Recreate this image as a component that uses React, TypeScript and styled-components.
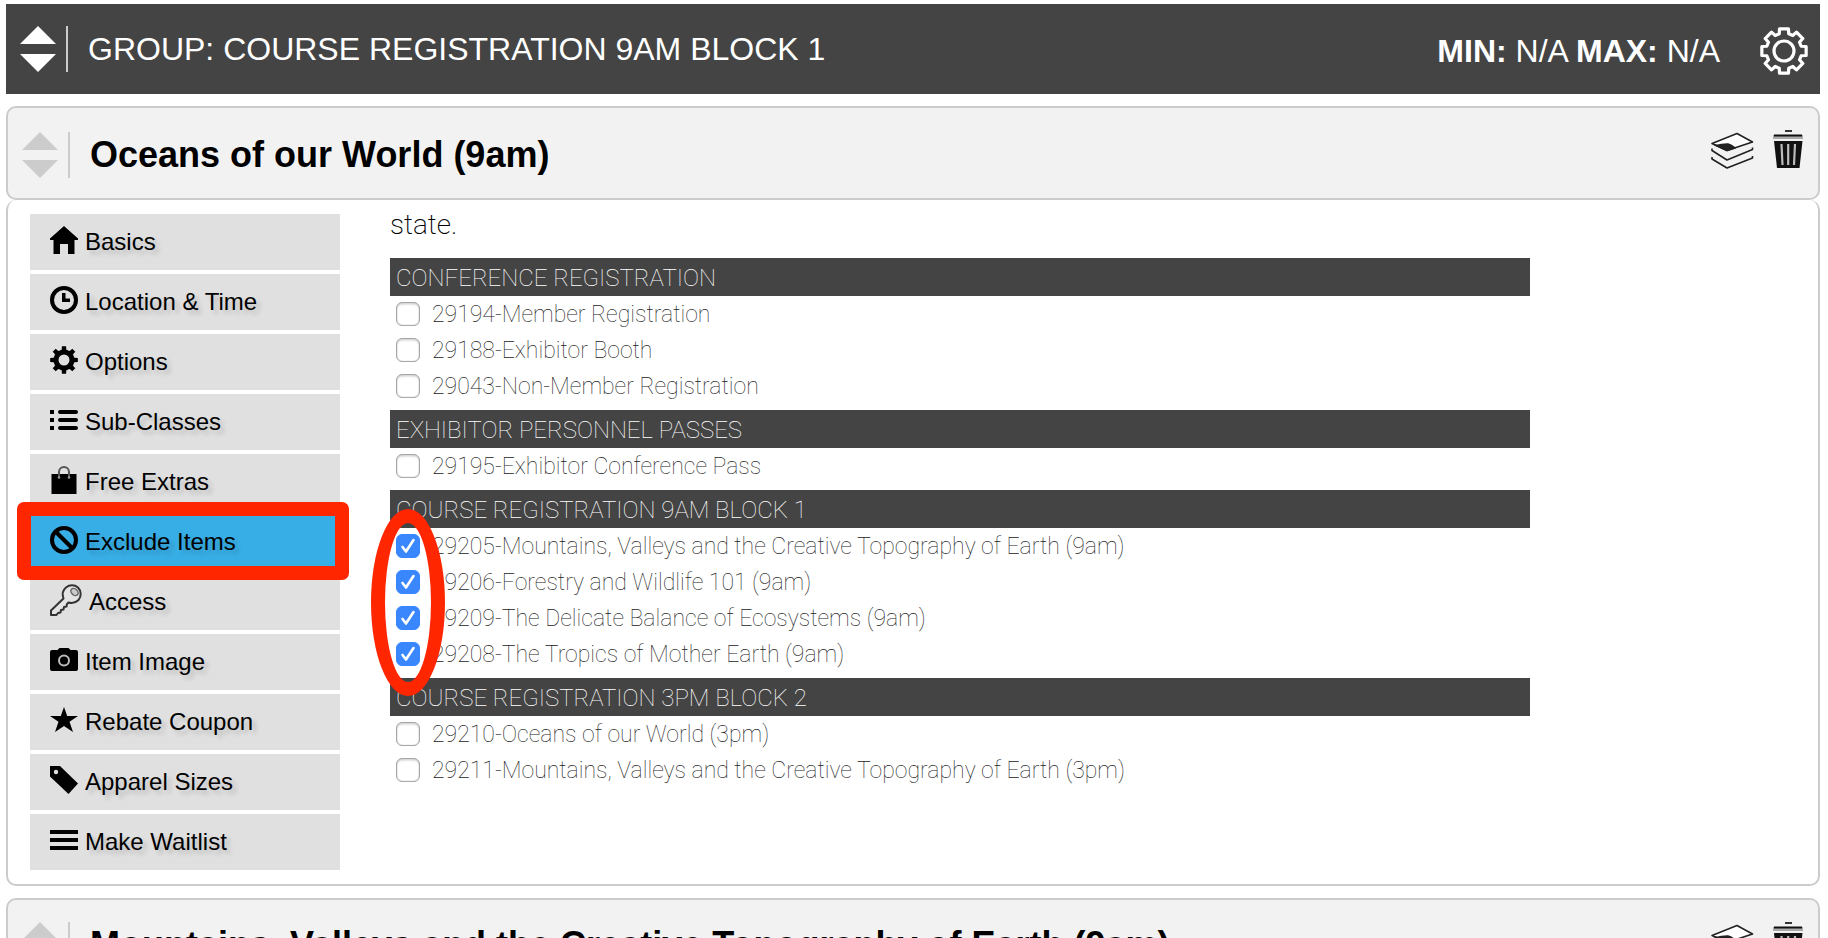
import React, { ReactNode, useState } from 'react';
import styled, { createGlobalStyle } from 'styled-components';

const GlobalStyle = createGlobalStyle`
  * { box-sizing: border-box; }
  body {
    margin: 0;
    background: #fff;
    color: #000;
    font-family: "Liberation Sans", Arial, sans-serif;
  }
  h1, h2, h3, p, ul { margin: 0; padding: 0; font-size: inherit; font-weight: inherit; }
  ul { list-style: none; }
`;

const Page = styled.main`
  height: 100vh;
  overflow: hidden;
  padding: 4px 8px 0 6px;
`;

/* ---------- Group bar ---------- */

const GroupBar = styled.header`
  display: flex;
  align-items: center;
  justify-content: space-between;
  min-height: 90px;
  padding: 0 12px 0 14px;
  margin-bottom: 12px;
  background: #444;
  color: #fff;
  font-size: 32px;
  line-height: 36px;
`;

const GroupTitle = styled.div`
  display: flex;
  align-items: center;
  gap: 20px;
`;

const GroupTools = styled.div`
  display: flex;
  align-items: center;
  gap: 40px;
  padding-top: 4px;
`;

const IconButton = styled.button`
  display: block;
  padding: 0;
  border: 0;
  background: none;
  color: inherit;
  cursor: pointer;

  svg { display: block; }
`;

const Grip = styled.button<{ $tone: string }>`
  flex: none;
  display: block;
  padding: 0 10px 0 0;
  border: 0;
  border-right: 2px solid #ccc;
  background: none;
  color: ${(p) => p.$tone};
  cursor: move;

  svg { display: block; }
`;

/* ---------- Item card ---------- */

const Card = styled.article`
  margin-bottom: 12px;
`;

const CardHeader = styled.div`
  display: flex;
  align-items: flex-start;
  justify-content: space-between;
  padding: 0 14px;
  border: 2px solid #ccc;
  border-radius: 10px;
  background: #f2f2f2;
`;

const CardTitle = styled.div<{ $open: boolean }>`
  display: flex;
  align-items: center;
  gap: 20px;
  padding: ${(p) => (p.$open ? '24px 0 20px' : '22px 0')};
  font-size: 36px;
  font-weight: 700;
  line-height: 40px;
`;

const CardActions = styled.div`
  display: flex;
  gap: 18px;
  padding-top: 21px;
`;

const CardBody = styled.div`
  display: flex;
  align-items: flex-start;
  gap: 50px;
  padding: 0 3px 14px 22px;
  border: 2px solid #ccc;
  border-top: 0;
  border-radius: 10px;
`;

/* ---------- Side navigation ---------- */

const SideNav = styled.nav`
  flex: none;
  display: flex;
  flex-direction: column;
  gap: 4px;
  width: 310px;
  padding-top: 14px;
`;

const NavButton = styled.button<{ $active: boolean }>`
  position: relative;
  display: flex;
  align-items: center;
  gap: 7px;
  height: 56px;
  padding: 0 20px;
  border: 0;
  background: ${(p) => (p.$active ? '#38aee6' : '#e0e0e0')};
  color: #000;
  font: 24px/28px "Liberation Sans", Arial, sans-serif;
  text-shadow: 4px 4px 4px rgba(0, 0, 0, 0.16);
  cursor: pointer;

  svg {
    flex: none;
    margin-bottom: 4px;
  }
`;

const BoxMark = styled.span`
  position: absolute;
  inset: -12px -9px -10px -13px;
  z-index: 1;
  border: 14px solid #ff2600;
  border-radius: 7px;
  pointer-events: none;
`;

/* ---------- Exclusion list ---------- */

const Exclusions = styled.div`
  flex: 1;
  min-width: 0;
  padding-top: 9px;
  font-family: Roboto, "Helvetica Neue", sans-serif;
  font-weight: 100;
`;

const Intro = styled.p`
  margin-bottom: 17px;
  font-size: 28px;
  font-weight: 200;
  line-height: 32px;
`;

const Section = styled.section`
  position: relative;
  width: 80%;
  margin-bottom: 6px;
`;

const SectionTitle = styled.h3`
  padding: 2px 6px 0;
  background: #444;
  color: #fff;
  font-size: 24px;
  line-height: 36px;
`;

const Option = styled.label`
  display: flex;
  align-items: center;
  gap: 12px;
  padding-left: 6px;
`;

const OptionText = styled.span`
  padding-top: 2px;
  color: #222;
  font-size: 23px;
  line-height: 34px;
`;

const CheckWrap = styled.span`
  flex: none;
  display: grid;

  > * { grid-area: 1 / 1; }
  svg { pointer-events: none; }
`;

const Checkbox = styled.input`
  appearance: none;
  width: 24px;
  height: 24px;
  margin: 0;
  border: 1px solid #a6a6a6;
  border-radius: 6px;
  background: #fff;
  box-shadow: inset 0 2px 2px rgba(0, 0, 0, 0.12), inset 0 0 1px rgba(0, 0, 0, 0.4);

  &:checked {
    border-color: #3a87fd;
    background: #3a87fd;
    box-shadow: none;
  }
`;

const OvalMark = styled.span`
  position: absolute;
  left: -19px;
  top: 19px;
  z-index: 1;
  width: 74px;
  height: 187px;
  border: 14px solid #ff2600;
  border-radius: 50%;
  pointer-events: none;
`;

/* ---------- Icons ---------- */

const cogPath = (teeth: number, c: number, root: number, tip: number, rootHalf: number, tipHalf: number) => {
  const points: string[] = [];
  for (let i = 0; i < teeth; i += 1) {
    const a = (i * 2 * Math.PI) / teeth - Math.PI / 2;
    [[root, -rootHalf], [tip, -tipHalf], [tip, tipHalf], [root, rootHalf]].forEach(([r, d]) => {
      points.push(`${(c + r * Math.cos(a + d)).toFixed(2)} ${(c + r * Math.sin(a + d)).toFixed(2)}`);
    });
  }
  return `M${points.join('L')}Z`;
};

const Arrows = () => (
  <svg width="36" height="46" viewBox="0 0 36 46" fill="currentColor" aria-hidden="true">
    <path d="M18 0L36 18H0ZM0 28H36L18 46Z" />
  </svg>
);

const SettingsIcon = () => (
  <svg width="48" height="48" viewBox="0 0 48 48" fill="none" stroke="currentColor" strokeWidth="3.2" strokeLinejoin="round" aria-hidden="true">
    <path d={cogPath(8, 24, 17.8, 22.6, 0.27, 0.2)} />
    <circle cx="24" cy="24" r="10" />
  </svg>
);

const LayersIcon = () => (
  <svg width="44" height="40" viewBox="0 0 44 40" fill="none" stroke="#222" strokeWidth="1.6" strokeLinejoin="round" aria-hidden="true">
    <path d="M2 28V30L17 39L42.5 29V27" />
    <path d="M2 19.5V21.5L17 31L42.5 20.5V18.500" fill="#f2f2f2" />
    <path d="M2 14.5L27 4.5L42.5 13L17 21.5Z" fill="#fff" />
    <path d="M5 16C9 17 13 14.500 18 15C22 16 23.500 18 25 19L17 21.5Z" fill="#222" />
  </svg>
);

const TrashIcon = () => (
  <svg width="32" height="40" viewBox="0 0 32 40" aria-hidden="true">
    <path d="M13 1H20V3H13Z" fill="#333" />
    <path d="M1 6H31V10H1Z" fill="#aaa" />
    <path d="M2 5.500H30V7.500H2Z" fill="#111" />
    <path d="M2 12H30.500L27.500 39H5Z" fill="#111" />
    <path d="M9.500 15L10.500 36M16.200 15V36M23 15L22 36" stroke="#bbb" strokeWidth="2.200" fill="none" />
  </svg>
);

const NavIcon = ({ size = 28, children }: { size?: number; children: ReactNode }) => (
  <svg width={size} height={size} viewBox={`0 0 ${size} ${size}`} fill="currentColor" aria-hidden="true">
    {children}
  </svg>
);

const navItems: { label: string; icon: ReactNode }[] = [
  {
    label: 'Basics',
    icon: <NavIcon><path d="M14 0L28 12.5V14H24.5V28H18V18H10V28H3.5V14H0V12.5Z" /></NavIcon>,
  },
  {
    label: 'Location & Time',
    icon: (
      <NavIcon>
        <circle cx="14" cy="14" r="12" fill="none" stroke="currentColor" strokeWidth="4" />
        <path d="M12 7H15.5V12.5H20V16H12Z" />
      </NavIcon>
    ),
  },
  {
    label: 'Options',
    icon: (
      <NavIcon>
        <path fillRule="evenodd" d={`${cogPath(8, 14, 10.6, 14, 0.22, 0.15)}M14 8.5A5.5 5.5 0 1 0 14 19.5A5.5 5.5 0 1 0 14 8.5Z`} />
      </NavIcon>
    ),
  },
  {
    label: 'Sub-Classes',
    icon: (
      <NavIcon>
        <path d="M0 4H4V8H0ZM0 12H4V16H0ZM0 20H4V24H0Z" />
        <path d="M10 6H26M10 14H26M10 22H26" stroke="currentColor" strokeWidth="4" strokeLinecap="round" />
      </NavIcon>
    ),
  },
  {
    label: 'Free Extras',
    icon: (
      <NavIcon>
        <path d="M1.5 8H26.5V28H1.5Z" />
        <path d="M9 12V6A5 5 0 0 1 19 6V12" fill="none" stroke="#555" strokeWidth="2" />
        <circle cx="9" cy="11.5" r="1.3" fill="#999" />
        <circle cx="19" cy="11.5" r="1.3" fill="#999" />
      </NavIcon>
    ),
  },
  {
    label: 'Exclude Items',
    icon: (
      <NavIcon>
        <g fill="none" stroke="currentColor" strokeWidth="4">
          <circle cx="14" cy="14" r="12" />
          <path d="M5.5 5.5L22.5 22.5" />
        </g>
      </NavIcon>
    ),
  },
  {
    label: 'Access',
    icon: (
      <NavIcon size={32}>
        <path
          d="M1 31V26.5L13.5 14.5C12 10.5 13 6 16 3.5C19.5 0.5 24.5 0.5 28 3.5C31.5 7 31.5 12.5 28.5 16C25.5 19 22 19.5 18.5 18.5L17 20L16.5 22.5L14 23L13.5 25.5L11 26L10.5 28.5L8 29L6.5 31Z"
          fill="#e4e4e4"
          stroke="#333"
          strokeWidth="2"
          strokeLinejoin="round"
        />
        <ellipse cx="24.5" cy="8" rx="4" ry="3" transform="rotate(42 24.5 8)" fill="#ccc" stroke="#666" strokeWidth="1.5" />
      </NavIcon>
    ),
  },
  {
    label: 'Item Image',
    icon: (
      <NavIcon>
        <path d="M2 4H7.5L9.5 2H18.5L20.5 4H26Q28 4 28 6V23Q28 25 26 25H2Q0 25 0 23V6Q0 4 2 4Z" />
        <circle cx="14" cy="14.5" r="5" fill="none" stroke="#bbb" strokeWidth="2" />
      </NavIcon>
    ),
  },
  {
    label: 'Rebate Coupon',
    icon: <NavIcon><path d="M14 1L17.2 10H28L19.5 15.8L23 26L14 20L5 26L8.5 15.8L0 10H10.8Z" /></NavIcon>,
  },
  {
    label: 'Apparel Sizes',
    icon: (
      <NavIcon>
        <path d="M0 0H10L28 17.5L18.5 28L0 10.5Z" />
        <circle cx="6" cy="6" r="2.2" fill="#e0e0e0" />
      </NavIcon>
    ),
  },
  {
    label: 'Make Waitlist',
    icon: <NavIcon><path d="M0 4H28V8H0ZM0 12H28V16H0ZM0 20H28V24H0Z" /></NavIcon>,
  },
];

/* ---------- Data ---------- */

interface Group {
  title: string;
  marked?: boolean;
  items: string[];
}

const groups: Group[] = [
  {
    title: 'CONFERENCE REGISTRATION',
    items: ['29194-Member Registration', '29188-Exhibitor Booth', '29043-Non-Member Registration'],
  },
  { title: 'EXHIBITOR PERSONNEL PASSES', items: ['29195-Exhibitor Conference Pass'] },
  {
    title: 'COURSE REGISTRATION 9AM BLOCK 1',
    marked: true,
    items: [
      '29205-Mountains, Valleys and the Creative Topography of Earth (9am)',
      '29206-Forestry and Wildlife 101 (9am)',
      '29209-The Delicate Balance of Ecosystems (9am)',
      '29208-The Tropics of Mother Earth (9am)',
    ],
  },
  {
    title: 'COURSE REGISTRATION 3PM BLOCK 2',
    items: ['29210-Oceans of our World (3pm)', '29211-Mountains, Valleys and the Creative Topography of Earth (3pm)'],
  },
];

/* ---------- Components ---------- */

const ExcludeOption = ({ label, initial }: { label: string; initial: boolean }) => {
  const [checked, setChecked] = useState(initial);
  return (
    <Option>
      <CheckWrap>
        <Checkbox type="checkbox" checked={checked} onChange={() => setChecked(!checked)} />
        {checked && (
          <svg width="24" height="24" viewBox="0 0 24 24" fill="none" stroke="#fff" strokeWidth="2.6" strokeLinecap="round" strokeLinejoin="round" aria-hidden="true">
            <path d="M6.5 13L10 17.5L17.5 6" />
          </svg>
        )}
      </CheckWrap>
      <OptionText>{label}</OptionText>
    </Option>
  );
};

const ItemCard = ({ title, children }: { title: string; children?: ReactNode }) => (
  <Card>
    <CardHeader>
      <CardTitle $open={Boolean(children)}>
        <Grip type="button" $tone="#ccc" aria-label="Reorder item"><Arrows /></Grip>
        <h2>{title}</h2>
      </CardTitle>
      <CardActions>
        <IconButton type="button" aria-label="Duplicate item"><LayersIcon /></IconButton>
        <IconButton type="button" aria-label="Delete item"><TrashIcon /></IconButton>
      </CardActions>
    </CardHeader>
    {children}
  </Card>
);

export default function App() {
  const [active, setActive] = useState('Exclude Items');
  return (
    <>
      <GlobalStyle />
      <Page>
        <GroupBar>
          <GroupTitle>
            <Grip type="button" $tone="#fff" aria-label="Reorder group"><Arrows /></Grip>
            <h1>GROUP: COURSE REGISTRATION 9AM BLOCK 1</h1>
          </GroupTitle>
          <GroupTools>
            <p><b>MIN:</b> N/A <b>MAX:</b> N/A</p>
            <IconButton type="button" aria-label="Group settings"><SettingsIcon /></IconButton>
          </GroupTools>
        </GroupBar>

        <ItemCard title="Oceans of our World (9am)">
          <CardBody>
            <SideNav>
              {navItems.map(({ label, icon }) => (
                <NavButton key={label} type="button" $active={label === active} onClick={() => setActive(label)}>
                  {icon}
                  {label}
                  {label === 'Exclude Items' && <BoxMark />}
                </NavButton>
              ))}
            </SideNav>
            <Exclusions>
              <Intro>state.</Intro>
              {groups.map((group) => (
                <Section key={group.title}>
                  <SectionTitle>{group.title}</SectionTitle>
                  <ul>
                    {group.items.map((item) => (
                      <li key={item}><ExcludeOption label={item} initial={Boolean(group.marked)} /></li>
                    ))}
                  </ul>
                  {group.marked && <OvalMark />}
                </Section>
              ))}
            </Exclusions>
          </CardBody>
        </ItemCard>

        <ItemCard title="Mountains, Valleys and the Creative Topography of Earth (9am)" />
      </Page>
    </>
  );
}
